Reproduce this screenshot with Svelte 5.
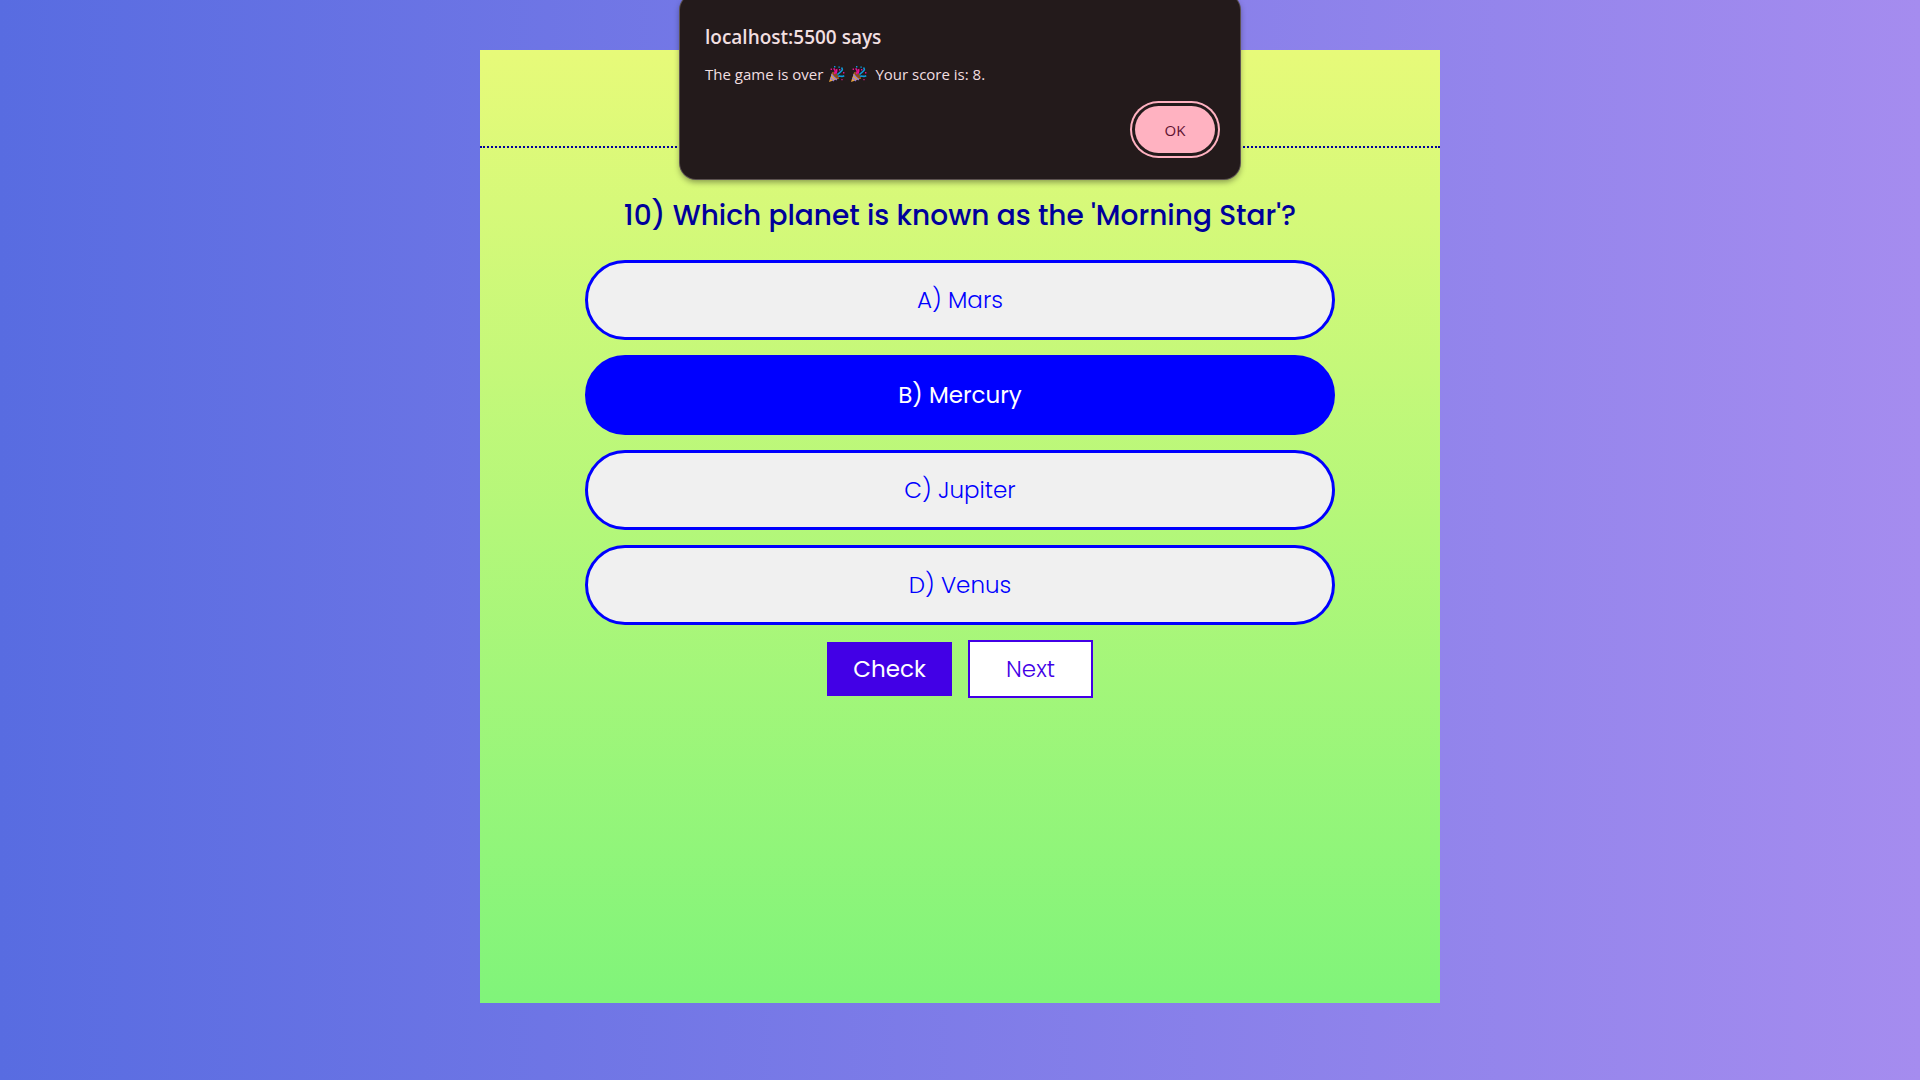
<script>
  const question = "10) Which planet is known as the 'Morning Star'?";
  const options = ['A) Mars', 'B) Mercury', 'C) Jupiter', 'D) Venus'];
  let selected = $state(1);
</script>

{#snippet popper()}
  <svg class="popper" viewBox="0 0 16 16" role="img" aria-label="party popper">
    <path d="M0 16 3.2 6 10 12.4Z" fill="#e8a33d" />
    <path d="M1.4 11.8 5 15M2.4 8.6 7.8 14" stroke="#8f7be0" stroke-width="1.4" />
    <ellipse cx="6.6" cy="9.2" rx="1.8" ry="4.4" transform="rotate(-45 6.6 9.2)" fill="#8a4b20" />
    <path d="M5.4 8C6.6 6 6.4 4 4.6 2.4M7 7.6C8 6 8 4.4 7.6 3" stroke="#e3128f" stroke-width="1.5" fill="none" />
    <path d="M8.4 8.6C10 6.8 12 6 13 4.4 14 3.2 13 2.6 12.6 1.4M9 10.4C11 9.4 13 11.4 15.2 9.6" stroke="#0d9bdc" stroke-width="1.6" fill="none" />
    <path d="M1.6 2.6h1.4v1.4H1.6ZM10 3h1.4v1.4H10ZM14 6h1.4v1.4H14ZM12.4 13h1.2v1.2h-1.2Z" fill="#e3128f" />
    <path d="M5 0h1.4v1.4H5ZM9.4 0.6h1.4v1.2H9.4Z" fill="#0d9bdc" />
  </svg>
{/snippet}

<div class="page">
  <main class="quiz">
    <header class="banner"></header>
    <section class="content">
      <h1>{question}</h1>
      <div class="options">
        {#each options as option, i}
          <button class="option" class:selected={selected === i} onclick={() => (selected = i)}>{option}</button>
        {/each}
      </div>
      <div class="actions">
        <button class="action check">Check</button>
        <button class="action next">Next</button>
      </div>
    </section>
  </main>

  <div class="dialog" role="alertdialog" aria-labelledby="dialog-title" aria-describedby="dialog-text">
    <h2 id="dialog-title">localhost:5500 says</h2>
    <p id="dialog-text"><span>The game is over</span><span class="poppers">{@render popper()}{@render popper()}</span><span>Your score is: 8.</span></p>
    <button class="ok">OK</button>
  </div>
</div>

<style>
  :global(body) {
    margin: 0;
  }
  .page {
    box-sizing: border-box;
    position: relative;
    min-height: 100vh;
    padding: 50px 0 77px;
    display: flex;
    justify-content: center;
    background: linear-gradient(to right, #586ce1, #a58cef);
    font-family: Poppins, Inter, sans-serif;
  }
  .quiz {
    width: 50%;
    background: linear-gradient(#e7fa79, #80f47a);
  }
  .banner {
    height: 96px;
    border-bottom: 2px dotted #00009b;
  }
  .content {
    display: flex;
    flex-direction: column;
    align-items: center;
    gap: 15px;
    padding: 46px 24px;
  }
  h1 {
    margin: 0 0 7px;
    font-size: 28px;
    line-height: 44px;
    font-weight: 500;
    color: #00009b;
    text-align: center;
  }
  .options {
    width: 100%;
    max-width: 750px;
    display: flex;
    flex-direction: column;
    gap: 15px;
  }
  .option {
    height: 80px;
    border: 3px solid #0000ff;
    border-radius: 40px;
    background: #f0f0f0;
    color: #0000ff;
    font-family: inherit;
    font-size: 23px;
    font-weight: 300;
  }
  .option.selected {
    background: #0000ff;
    color: #fff;
    font-weight: 400;
  }
  .actions {
    display: flex;
    align-items: center;
    gap: 16px;
  }
  .action {
    box-sizing: border-box;
    width: 125px;
    font-family: inherit;
    font-size: 23px;
    line-height: 54px;
    padding: 0;
  }
  .check {
    border: none;
    background: #4200e6;
    color: #fff;
    font-weight: 400;
  }
  .next {
    border: 2px solid #4200e6;
    background: #fff;
    color: #4200e6;
    font-weight: 300;
  }
  .dialog {
    box-sizing: border-box;
    position: absolute;
    top: -6px;
    left: 50%;
    margin-left: -280px;
    width: 560px;
    padding: 30px 25px 26px;
    display: flex;
    flex-direction: column;
    align-items: flex-start;
    border-radius: 16px;
    background: #231a1b;
    box-shadow: 0 0 0 1px #5b5150, 0 3px 6px rgba(0, 0, 0, 0.4);
    color: #f1dfe0;
    font-family: "Segoe UI", "Open Sans", sans-serif;
  }
  h2 {
    margin: 0;
    font-size: 19px;
    line-height: 26px;
    font-weight: 600;
  }
  p {
    margin: 14px 0 22px;
    display: flex;
    align-items: center;
    font-size: 15px;
    line-height: 20px;
  }
  .poppers {
    display: flex;
    gap: 6px;
    margin: 0 8px 0 6px;
  }
  .popper {
    width: 16px;
    height: 16px;
  }
  .ok {
    align-self: flex-end;
    width: 80px;
    height: 47px;
    border: none;
    border-radius: 24px;
    background: #ffb2c1;
    box-shadow: 0 0 0 3px #231a1b, 0 0 0 5px #ffb2c1;
    color: #5e1130;
    font-family: inherit;
    font-size: 15px;
  }
</style>
